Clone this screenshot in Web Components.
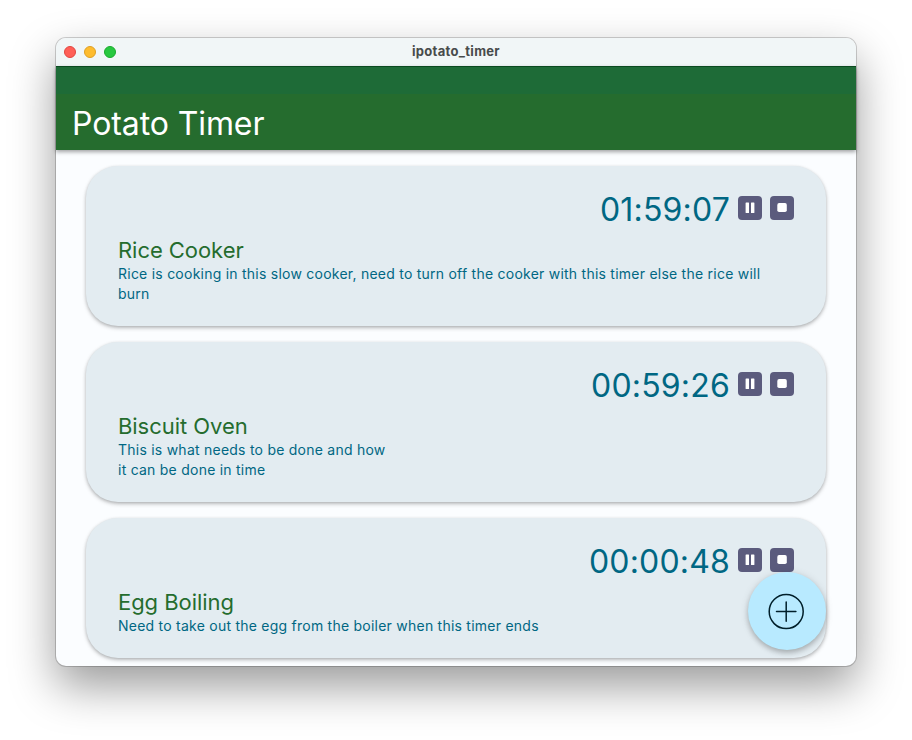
<!DOCTYPE html>
<html lang="en">
<head>
<meta charset="utf-8">
<title>ipotato_timer</title>
<style>
body { margin: 0; background: #fff; height: 740px; overflow: hidden; font-family: Inter, "Liberation Sans", sans-serif; }
</style>
</head>
<body>
<app-window name="ipotato_timer">
  <app-header slot="header">Potato Timer</app-header>
  <timer-card time="01:59:07"><span slot="title">Rice Cooker</span>Rice is cooking in this slow cooker, need to turn off the cooker with this timer else the rice will burn</timer-card>
  <timer-card time="00:59:26"><span slot="title">Biscuit Oven</span>This is what needs to be done and how<br>it can be done in time</timer-card>
  <timer-card time="00:00:48"><span slot="title">Egg Boiling</span>Need to take out the egg from the boiler when this timer ends</timer-card>
  <add-button slot="fab"></add-button>
</app-window>
<script>
function define(name, html, setup) {
  customElements.define(name, class extends HTMLElement {
    constructor() {
      super();
      this.attachShadow({ mode: "open" }).innerHTML = html;
    }
    connectedCallback() { if (setup) setup(this, this.shadowRoot); }
  });
}

define("app-window", `
<style>
:host { display: flex; flex-direction: column; position: relative; box-sizing: border-box; width: 800px; height: 628px; margin: 38px 56px 0; border-radius: 10px; background: #fbfdff;
  box-shadow: 0 0 0 1px rgba(0,0,0,.18), 0 20px 46px rgba(0,0,0,.4); }
.bar { display: grid; grid-template-columns: 1fr auto 1fr; align-items: center; height: 28px; flex: none; background: #f1f6f7; border-radius: 10px 10px 0 0; }
.lights { display: flex; gap: 8px; padding-left: 8px; }
i { width: 12px; height: 12px; border-radius: 50%; box-sizing: border-box; border: 1px solid; }
.r { background: #ff5f57; border-color: #e24640; }
.y { background: #febc2e; border-color: #dfa023; }
.g { background: #28c840; border-color: #1aab2c; }
b { font-size: 13px; line-height: 16px; font-weight: 700; color: #484b4b; letter-spacing: .3px; padding-bottom: 2px; }
main { flex: 1; min-height: 0; display: flex; flex-direction: column; gap: 16px; padding: 16px 30px 0; overflow: hidden; border-radius: 0 0 10px 10px; }
.fab { position: absolute; right: 30px; bottom: 16px; }
</style>
<div class="bar"><div class="lights"><i class="r"></i><i class="y"></i><i class="g"></i></div><b></b><span></span></div>
<slot name="header"></slot>
<main><slot></slot></main>
<div class="fab"><slot name="fab"></slot></div>`,
(el, root) => { root.querySelector("b").textContent = el.getAttribute("name"); });

define("app-header", `
<style>
:host { display: flex; align-items: flex-end; flex: none; box-sizing: border-box; height: 84px; padding: 0 16px 6px; position: relative; z-index: 1; color: #fff;
  background: linear-gradient(#1e6b37 27px, #256c2e 27px); border-top: 1px solid #0b4a20; box-shadow: 0 2px 4px rgba(0,0,0,.36); }
h1 { margin: 0; font-size: 32px; line-height: 40px; font-weight: 430; letter-spacing: -.1px; }
</style>
<h1><slot></slot></h1>`);

define("icon-button", `
<style>
:host { display: block; width: 24px; height: 24px; border-radius: 4px; background: #5b5b7d; }
svg { display: block; }
</style>
<svg width="24" height="24" fill="#fff"></svg>`,
(el, root) => {
  root.querySelector("svg").innerHTML = el.getAttribute("kind") === "pause"
    ? '<rect x="7.6" y="6.4" width="3.4" height="10.6" rx=".5"/><rect x="13" y="6.4" width="3.4" height="10.6" rx=".5"/>'
    : '<rect x="7.3" y="7.1" width="9.5" height="9" rx="1.8"/>';
});

define("timer-card", `
<style>
:host { display: block; flex: none; box-sizing: border-box; padding: 22px 32px; border-radius: 32px; background: #e3ecf1;
  box-shadow: 0 1px 3px rgba(0,0,0,.13), 0 2px 4px rgba(0,0,0,.22); }
.row { display: flex; justify-content: flex-end; align-items: center; gap: 8px; height: 40px; margin-bottom: 8px; }
time { font-size: 32px; line-height: 40px; font-weight: 410; letter-spacing: .18px; padding-top: 3px; color: #006783; }
h2 { margin: 0; font-size: 22px; line-height: 28px; font-weight: 400; letter-spacing: -.05px; color: #256c2e; }
p { margin: 0; font-size: 14px; line-height: 20px; letter-spacing: .24px; color: #006783; }
</style>
<div class="row"><time></time><icon-button kind="pause"></icon-button><icon-button kind="stop"></icon-button></div>
<h2><slot name="title"></slot></h2>
<p><slot></slot></p>`,
(el, root) => { root.querySelector("time").textContent = el.getAttribute("time"); });

define("add-button", `
<style>
:host { display: grid; place-items: center; width: 78px; height: 78px; border-radius: 50%; background: #b8eaff; box-shadow: 0 3px 5px rgba(0,0,0,.2), 0 1px 8px rgba(0,0,0,.12); }
svg { display: block; }
</style>
<svg width="40" height="40" viewBox="0 0 40 40" fill="none" stroke="#001f2a" stroke-width="1.5" stroke-linecap="round"><circle cx="19.2" cy="20.6" r="17"/><path d="M9.5 20.6H28.9M19.2 10.9V30.3"/></svg>`);
</script>
</body>
</html>
